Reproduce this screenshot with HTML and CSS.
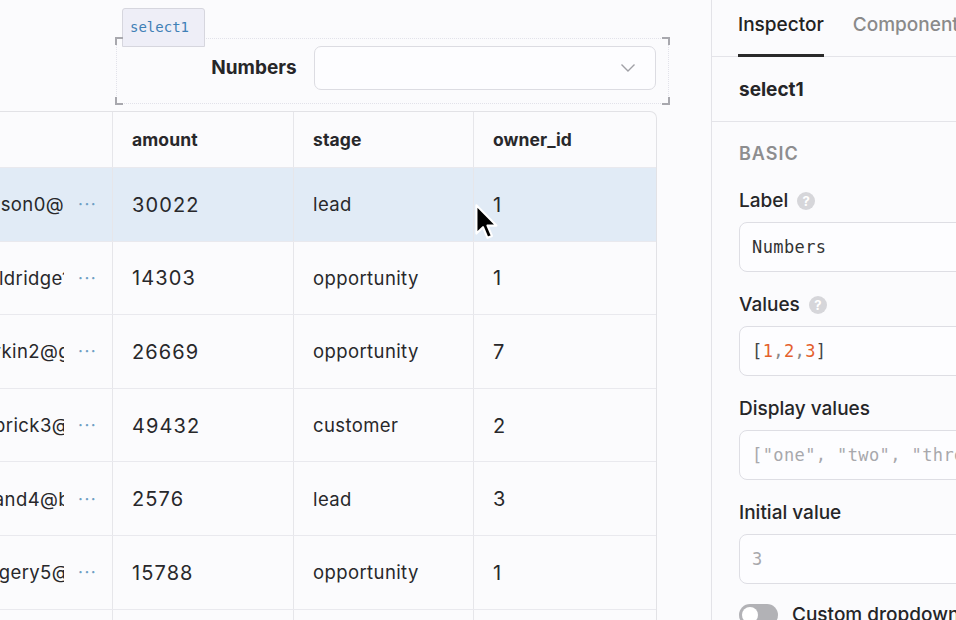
FILE: index.html
```html
<!DOCTYPE html>
<html>
<head>
<meta charset="utf-8">
<link rel="stylesheet" href="styles.css">
</head>
<body>
<div class="app">
  <div class="canvas">
    <div class="select-wrap">
      <div class="badge">select1</div>
      <span class="corner tl"></span><span class="corner tr"></span><span class="corner bl"></span><span class="corner br"></span>
      <div class="select-label">Numbers</div>
      <div class="select-box">
        <svg class="chev" width="16" height="10" viewBox="0 0 16 10"><path d="M1.5 1.5 L8 8 L14.5 1.5" fill="none" stroke="#a0a0a6" stroke-width="1.4"/></svg>
      </div>
    </div>
    <div class="table">
      <div class="row head">
        <div class="cell c0"></div>
        <div class="cell c1">amount</div>
        <div class="cell c2">stage</div>
        <div class="cell c3">owner_id</div>
      </div>
      <div class="row sel">
        <div class="cell c0"><div class="email"><span class="em-in">udson0@</span></div><span class="dots">···</span></div>
        <div class="cell c1 n">30022</div>
        <div class="cell c2">lead</div>
        <div class="cell c3 n">1</div>
      </div>
      <div class="row">
        <div class="cell c0"><div class="email"><span class="em-in cut">mwoldridge1</span></div><span class="dots">···</span></div>
        <div class="cell c1 n">14303</div>
        <div class="cell c2">opportunity</div>
        <div class="cell c3 n">1</div>
      </div>
      <div class="row">
        <div class="cell c0"><div class="email"><span class="em-in cut">bdurkin2@g</span></div><span class="dots">···</span></div>
        <div class="cell c1 n">26669</div>
        <div class="cell c2">opportunity</div>
        <div class="cell c3 n">7</div>
      </div>
      <div class="row">
        <div class="cell c0"><div class="email"><span class="em-in cut">dlambrick3@</span></div><span class="dots">···</span></div>
        <div class="cell c1 n">49432</div>
        <div class="cell c2">customer</div>
        <div class="cell c3 n">2</div>
      </div>
      <div class="row">
        <div class="cell c0"><div class="email"><span class="em-in cut">bholland4@b</span></div><span class="dots">···</span></div>
        <div class="cell c1 n">2576</div>
        <div class="cell c2">lead</div>
        <div class="cell c3 n">3</div>
      </div>
      <div class="row">
        <div class="cell c0"><div class="email"><span class="em-in cut">hgregery5@</span></div><span class="dots">···</span></div>
        <div class="cell c1 n">15788</div>
        <div class="cell c2">opportunity</div>
        <div class="cell c3 n">1</div>
      </div>
      <div class="row">
        <div class="cell c0"></div>
        <div class="cell c1"></div>
        <div class="cell c2"></div>
        <div class="cell c3"></div>
      </div>
    </div>
    <svg class="cursor" width="26" height="40" viewBox="0 0 22 34"><path d="M2 2 L2 26 L7.6 20.6 L11.4 29.6 L15.2 28 L11.4 19.2 L19 19.2 Z" fill="#000" stroke="#fff" stroke-width="1.8" stroke-linejoin="round"/></svg>
  </div>
  <div class="panel">
    <div class="tabs">
      <div class="tab active">Inspector</div>
      <div class="tab">Components</div>
    </div>
    <div class="comp-name">select1</div>
    <div class="section">
      <div class="section-title">BASIC</div>
      <div class="field">
        <div class="field-label">Label <span class="help">?</span></div>
        <div class="input mono">Numbers</div>
      </div>
      <div class="field">
        <div class="field-label">Values <span class="help">?</span></div>
        <div class="input mono"><span class="br">[</span><span class="num">1</span><span class="cm">,</span><span class="num">2</span><span class="cm">,</span><span class="num">3</span><span class="br">]</span></div>
      </div>
      <div class="field">
        <div class="field-label">Display values</div>
        <div class="input mono ph">["one", "two", "three"]</div>
      </div>
      <div class="field">
        <div class="field-label">Initial value</div>
        <div class="input mono ph">3</div>
      </div>
      <div class="toggle-row">
        <span class="toggle"><span class="knob"></span></span>
        <span class="toggle-label">Custom dropdown options</span>
      </div>
    </div>
  </div>
</div>
</body>
</html>
```

FILE: styles.css
```css
* { box-sizing: border-box; }
html, body { margin: 0; padding: 0; }
body {
  background: #fbfbfd;
  font-family: Inter, "Noto Sans", sans-serif;
  color: #252528;
}
.app {
  display: flex;
  width: 956px;
  height: 620px;
  overflow: hidden;
}
.canvas {
  width: 711px;
  flex: none;
  position: relative;
  overflow: hidden;
  display: flex;
  flex-direction: column;
  align-items: flex-start;
}
.canvas > * { flex: none; }
.select-wrap {
  position: relative;
  margin-left: 116px;
  margin-top: 38px;
  width: 553px;
  height: 66px;
  border: 1px dotted #e2e2ea;
  display: flex;
  align-items: flex-start;
  padding-top: 7px;
  padding-right: 12px;
}
.badge {
  position: absolute;
  left: 5px;
  top: -31px;
  width: 83px;
  height: 39px;
  background: #eeeef7;
  border: 1px solid #d6d6de;
  border-radius: 3px 3px 0 0;
  font-family: "DejaVu Sans Mono", monospace;
  font-size: 14px;
  color: #3f80b6;
  padding: 10px 0 0 7px;
}
.corner {
  position: absolute;
  width: 8px;
  height: 8px;
  border: 0 solid #a8a8ae;
}
.corner.tl { left: -2px; top: -2px; border-left-width: 2px; border-top-width: 2px; }
.corner.tr { right: -2px; top: -2px; border-right-width: 2px; border-top-width: 2px; }
.corner.bl { left: -2px; bottom: -2px; border-left-width: 2px; border-bottom-width: 2px; }
.corner.br { right: -2px; bottom: -2px; border-right-width: 2px; border-bottom-width: 2px; }
.select-label {
  width: 180px;
  text-align: right;
  font-weight: 700;
  font-size: 19px;
  line-height: 44px;
  color: #262628;
}
.select-box {
  margin-left: 17px;
  width: 343px;
  height: 44px;
  background: #fdfdff;
  border: 1px solid #dcdce2;
  border-radius: 7px;
  display: flex;
  align-items: center;
  justify-content: flex-end;
  padding-right: 19px;
}
.table {
  margin-top: 7px;
  margin-left: -87px;
  width: 744px;
  border-top: 1px solid #e2e2e6;
  border-right: 1px solid #e2e2e6;
  border-radius: 0 7px 0 0;
  display: flex;
  flex-direction: column;
}
.row {
  display: flex;
  flex: none;
  height: 73.6px;
  border-bottom: 1px solid #e9e9ee;
}
.row.head { height: 56px; }
.row.sel { background: #e1ebf6; }
.cell {
  display: flex;
  align-items: center;
  padding-left: 19px;
  font-size: 18.5px;
  letter-spacing: 0.4px;
  color: #28282b;
  border-right: 1px solid #e6e6ea;
}
.cell.n { letter-spacing: 1.1px; font-size: 20px; padding-top: 1px; }
.cell:last-child { border-right: none; }
.head .cell { font-weight: 700; font-size: 17.5px; letter-spacing: 0.1px; }
.c0 { width: 200px; padding-left: 0; }
.c1 { width: 181px; }
.c2 { width: 180px; }
.c3 { width: 182px; }
.email {
  width: 151px;
  overflow: hidden;
  display: flex;
  justify-content: flex-end;
  white-space: nowrap;
}
.em-in { flex: none; }
.em-in.cut { margin-right: -6px; }
.dots {
  margin-left: 14px;
  color: #6e9fc4;
  font-size: 17px;
  letter-spacing: 1.5px;
}
.cursor {
  position: absolute;
  left: 474px;
  top: 203px;
}
.panel {
  flex: 1;
  min-width: 0;
  border-left: 1px solid #e3e3e8;
  overflow: hidden;
}
.tabs {
  display: flex;
  gap: 29px;
  padding-left: 26px;
  border-bottom: 1px solid #e4e4e9;
  height: 57px;
}
.tab {
  font-size: 19px;
  font-weight: 500;
  color: #8a8a8a;
  line-height: 24px;
  padding-top: 13px;
  white-space: nowrap;
}
.tab.active {
  color: #222;
  border-bottom: 3px solid #2a2a2a;
  height: 57px;
}
.comp-name {
  height: 65px;
  padding-left: 27px;
  font-size: 19px;
  font-weight: 700;
  line-height: 65px;
  border-bottom: 1px solid #e4e4e9;
}
.section {
  padding: 21px 0 0 27px;
}
.section-title {
  font-size: 18px;
  font-weight: 600;
  color: #8d8d8f;
  letter-spacing: 1px;
  line-height: 22px;
  margin-bottom: 24px;
}
.field { margin-bottom: 21px; }
.field-label {
  font-size: 19px;
  font-weight: 500;
  line-height: 24px;
  display: flex;
  align-items: center;
  gap: 9px;
  margin-bottom: 9px;
  color: #262628;
  white-space: nowrap;
}
.help {
  width: 18px;
  height: 18px;
  border-radius: 50%;
  background: #d6d6da;
  color: #fff;
  font-size: 13px;
  font-weight: 700;
  display: inline-flex;
  align-items: center;
  justify-content: center;
}
.input {
  width: 260px;
  height: 50px;
  border: 1px solid #dedee4;
  border-radius: 8px;
  background: #fdfdff;
  display: flex;
  align-items: center;
  padding-left: 12px;
  white-space: nowrap;
  overflow: hidden;
}
.mono {
  font-family: "DejaVu Sans Mono", monospace;
  font-size: 17px;
  letter-spacing: 0.4px;
  color: #333;
}
.mono.ph { color: #a8a8ac; }
.br { color: #444; }
.cm { color: #888; }
.num { color: #e4602c; }
.toggle-row {
  display: flex;
  align-items: center;
  gap: 14px;
  margin-top: -2px;
}
.toggle {
  width: 39px;
  height: 22px;
  border-radius: 11px;
  background: #b2b2b6;
  position: relative;
  flex: none;
}
.knob {
  position: absolute;
  left: 3px;
  top: 3px;
  width: 16px;
  height: 16px;
  border-radius: 50%;
  background: #fff;
}
.toggle-label {
  font-size: 19px;
  font-weight: 500;
  white-space: nowrap;
}
```
